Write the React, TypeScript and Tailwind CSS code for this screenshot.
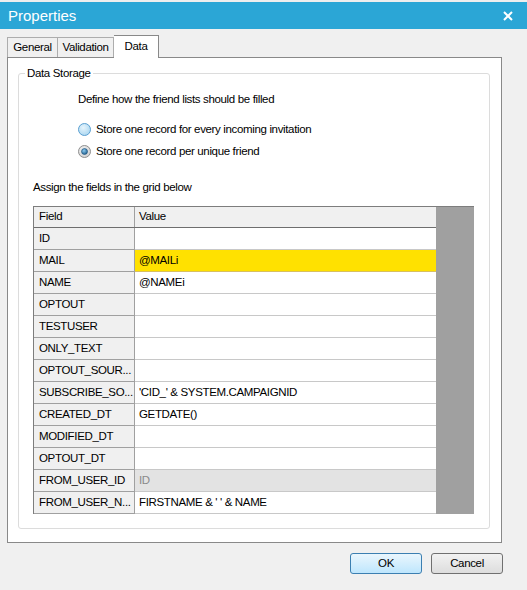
import React from "react";

const rows: { f: string; v: string; kind?: "yellow" | "disabled" }[] = [
  { f: "ID", v: "" },
  { f: "MAIL", v: "@MAILi", kind: "yellow" },
  { f: "NAME", v: "@NAMEi" },
  { f: "OPTOUT", v: "" },
  { f: "TESTUSER", v: "" },
  { f: "ONLY_TEXT", v: "" },
  { f: "OPTOUT_SOUR...", v: "" },
  { f: "SUBSCRIBE_SO...", v: "'CID_' & SYSTEM.CAMPAIGNID" },
  { f: "CREATED_DT", v: "GETDATE()" },
  { f: "MODIFIED_DT", v: "" },
  { f: "OPTOUT_DT", v: "" },
  { f: "FROM_USER_ID", v: "ID", kind: "disabled" },
  { f: "FROM_USER_N...", v: "FIRSTNAME & ' ' & NAME" },
];

function Radio({ checked }: { checked?: boolean }) {
  return (
    <svg width="13" height="13" viewBox="0 0 13 13">
      <defs>
        <radialGradient id={checked ? "rg2" : "rg1"} cx="0.4" cy="0.35" r="0.7">
          <stop offset="0" stopColor={checked ? "#f4f4f4" : "#e6f4fc"} />
          <stop offset="1" stopColor={checked ? "#d0d0d0" : "#a9d6f0"} />
        </radialGradient>
        <radialGradient id="dot" cx="0.4" cy="0.35" r="0.7">
          <stop offset="0" stopColor="#8ccaf0" />
          <stop offset="1" stopColor="#1b5b8a" />
        </radialGradient>
      </defs>
      <circle cx="6.5" cy="6.5" r="6" fill={`url(#${checked ? "rg2" : "rg1"})`} stroke={checked ? "#8f8f8f" : "#5b9fd0"} strokeWidth="1" />
      {checked && <circle cx="6.5" cy="6.5" r="3" fill="url(#dot)" stroke="#1a4f7a" strokeWidth="0.6" />}
    </svg>
  );
}

export default function App() {
  return (
    <div
      className="w-[527px] h-[590px] bg-[#f0f0f0] flex flex-col text-[11.5px] tracking-[-0.35px] text-black overflow-hidden"
      style={{ fontFamily: '"Liberation Sans", Arial, sans-serif' }}
    >
      <div className="h-[2px] bg-[#eeeeee]" />
      <div className="h-[27px] bg-[#2ba6d6] flex items-center justify-between pl-[8px] pr-[14px]">
        <span className="text-white text-[15px] tracking-normal leading-none">Properties</span>
        <svg width="10" height="10" viewBox="0 0 10 10">
          <path d="M1 1L9 9M9 1L1 9" stroke="#ffffff" strokeWidth="2" />
        </svg>
      </div>

      <div className="pl-[7px] pt-[6px] w-[502px]">
        {/* tabs */}
        <div className="flex items-end h-[22px] relative z-10">
          <div className="h-[20px] w-[51px] border border-[#adadad] border-b-0 bg-[#f0f0f0] flex items-center justify-center">
            General
          </div>
          <div className="h-[20px] w-[56px] border border-[#adadad] border-l-0 border-b-0 bg-[#f0f0f0] flex items-center justify-center">
            Validation
          </div>
          <div className="h-[23px] w-[45px] border border-[#898989] border-l-0 border-b-0 bg-white flex items-start justify-center pt-[2px] -mb-[1px]">
            Data
          </div>
        </div>
        {/* panel */}
        <div className="h-[486px] bg-white border border-[#898989] pl-[10px] pr-[11px] pt-[7px]">
          <fieldset className="border border-[#dcdcdc] rounded-[3px] h-[464px] pl-[14px] pr-[15px]">
            <legend className="-ml-[8px] px-[2px] leading-[16px]">Data Storage</legend>
            <div className="pl-[45px] pt-[10px] leading-[16px]">Define how the friend lists should be filled</div>
            <div className="pl-[45px] pt-[16px] flex flex-col gap-[9px]">
              <div className="flex items-center gap-[5px] h-[13px]">
                <Radio />
                <span>Store one record for every incoming invitation</span>
              </div>
              <div className="flex items-center gap-[5px] h-[13px]">
                <Radio checked />
                <span>Store one record per unique friend</span>
              </div>
            </div>
            <div className="pt-[21px] leading-[16px]">Assign the fields in the grid below</div>
            <div className="mt-[11px] flex w-[441px] border-t border-l border-[#7d7d7d]">
              <div className="w-[402px] flex flex-col">
                <div className="flex h-[21px] bg-[#f0f0f0] border-b border-[#6e6e6e]">
                  <div className="w-[101px] border-r border-[#a0a0a0] pl-[5px] flex items-center">Field</div>
                  <div className="flex-1 pl-[4px] flex items-center">Value</div>
                </div>
                {rows.map((r) => (
                  <div key={r.f} className="flex h-[22px]">
                    <div className="w-[101px] bg-[#f0f0f0] border-r border-b border-[#a0a0a0] pl-[5px] flex items-center whitespace-nowrap">
                      {r.f}
                    </div>
                    <div
                      className={
                        "flex-1 pl-[4px] flex items-center border-b whitespace-nowrap " +
                        (r.kind === "yellow"
                          ? "bg-[#ffe100] border-[#d8c060]"
                          : r.kind === "disabled"
                          ? "bg-[#e3e3e3] text-[#8a8a8a] border-[#c8c8c8]"
                          : "bg-white border-[#c8c8c8]")
                      }
                    >
                      {r.v}
                    </div>
                  </div>
                ))}
              </div>
              <div className="flex-1 bg-[#a0a0a0]" />
            </div>
          </fieldset>
        </div>
      </div>

      <div className="flex justify-end gap-[9px] pr-[24px] pt-[10px]">
        <button className="w-[72px] h-[21px] border border-[#3c7fb1] rounded-[3px] bg-gradient-to-b from-[#eaf6fd] to-[#bee6fd] flex items-center justify-center">
          OK
        </button>
        <button className="w-[72px] h-[21px] border border-[#707070] rounded-[3px] bg-gradient-to-b from-[#f2f2f2] to-[#dddddd] flex items-center justify-center">
          Cancel
        </button>
      </div>
    </div>
  );
}
